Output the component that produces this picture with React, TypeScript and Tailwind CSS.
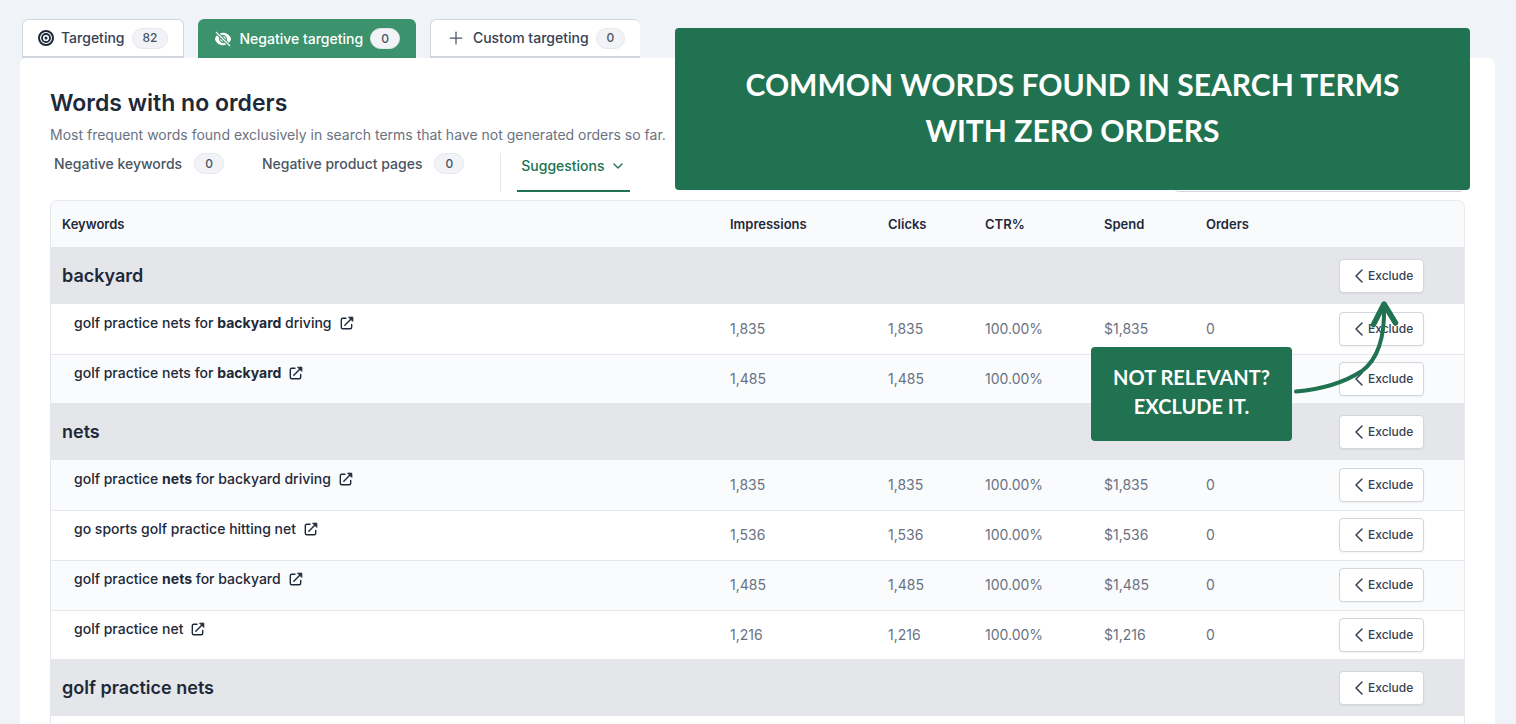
import React from 'react';
import { ChevronDown, Plus } from 'lucide-react';
import { HiEyeSlash } from 'react-icons/hi2';

interface GroupRow {
  kind: 'group';
  word: string;
}

interface TermRow {
  kind: 'term';
  before: string;
  bold?: string;
  after?: string;
  volume: string;
  spend?: string;
  orders?: string;
}

const ROWS: (GroupRow | TermRow)[] = [
  { kind: 'group', word: 'backyard' },
  { kind: 'term', before: 'golf practice nets for ', bold: 'backyard', after: ' driving', volume: '1,835', spend: '$1,835', orders: '0' },
  { kind: 'term', before: 'golf practice nets for ', bold: 'backyard', volume: '1,485' },
  { kind: 'group', word: 'nets' },
  { kind: 'term', before: 'golf practice ', bold: 'nets', after: ' for backyard driving', volume: '1,835', spend: '$1,835', orders: '0' },
  { kind: 'term', before: 'go sports golf practice hitting net', volume: '1,536', spend: '$1,536', orders: '0' },
  { kind: 'term', before: 'golf practice ', bold: 'nets', after: ' for backyard', volume: '1,485', spend: '$1,485', orders: '0' },
  { kind: 'term', before: 'golf practice net', volume: '1,216', spend: '$1,216', orders: '0' },
  { kind: 'group', word: 'golf practice nets' },
];

const Badge = ({ children }: { children: React.ReactNode }) => (
  <span className="inline-flex h-[21px] items-center rounded-full border border-gray-200 bg-[#f1f3f6] px-[10px] text-xs font-medium text-gray-600">
    {children}
  </span>
);

const TargetIcon = () => (
  <svg viewBox="0 0 16 16" className="size-4" fill="none" stroke="currentColor" aria-hidden="true">
    <circle cx="8" cy="8" r="7" strokeWidth="2" />
    <circle cx="8" cy="8" r="4" strokeWidth="1.8" />
    <circle cx="8" cy="8" r="1.5" fill="currentColor" stroke="none" />
  </svg>
);

const OpenIcon = () => (
  <svg viewBox="0 0 14 14" className="size-[14px]" fill="none" stroke="currentColor" strokeWidth="1.4" strokeLinecap="round" strokeLinejoin="round" aria-hidden="true">
    <path d="M6 2.300H2.800Q1.300 2.300 1.300 3.800V11.200Q1.300 12.700 2.800 12.700H10.200Q11.700 12.700 11.700 11.200V8.500" />
    <path d="M4.800 9.200L11.500 2.500" />
    <path d="M9 1.200H12.800V5Z" fill="currentColor" strokeWidth="1" />
  </svg>
);

const ExcludeButton = () => (
  <button
    type="button"
    className="flex h-[34px] w-[85px] items-center gap-[5px] rounded border border-gray-300 bg-white pl-[15px] text-xs font-medium text-gray-700 shadow-xs"
  >
    <svg viewBox="0 0 8 14" className="h-[14px] w-2" fill="none" stroke="currentColor" strokeWidth="1.500" strokeLinecap="round" strokeLinejoin="round" aria-hidden="true">
      <path d="M7 1L1 7L7 13" />
    </svg>
    Exclude
  </button>
);

const TargetingTabs = () => (
  <nav className="flex gap-[14px] pl-[22px] pt-[19px] text-sm font-medium text-gray-700">
    <button type="button" className="flex h-[39px] items-center gap-[7px] rounded-t-md border border-b-2 border-gray-300 bg-white px-[15px]">
      <span className="text-gray-800"><TargetIcon /></span>
      Targeting
      <Badge>82</Badge>
    </button>
    <button type="button" className="flex h-[39px] items-center gap-[7px] rounded-t-md bg-[#3b926d] px-4 text-white">
      <HiEyeSlash className="size-[18px]" />
      Negative targeting
      <Badge>0</Badge>
    </button>
    <button type="button" className="flex h-[39px] items-center gap-[7px] rounded-t-md border border-b-2 border-r-0 border-gray-300 bg-white px-[15px]">
      <Plus className="size-5 text-gray-600" strokeWidth={1.5} />
      Custom targeting
      <Badge>0</Badge>
    </button>
  </nav>
);

const SubTabs = () => (
  <div className="flex h-[39px] items-start text-sm font-medium text-gray-600">
    <button type="button" className="flex items-center gap-3 pl-1">
      Negative keywords
      <Badge>0</Badge>
    </button>
    <button type="button" className="ml-[38px] flex items-center gap-3">
      Negative product pages
      <Badge>0</Badge>
    </button>
    <div className="ml-9 h-full border-l border-gray-200" />
    <button type="button" className="ml-4 flex h-full items-center gap-[5px] border-b-2 border-[#207250] px-1 pb-3 text-[#207250]">
      Suggestions
      <ChevronDown className="size-4" />
    </button>
    <input
      type="search"
      aria-label="Search keywords"
      className="ml-auto h-[39px] w-[292px] rounded-md border border-gray-300 bg-white px-3"
    />
  </div>
);

const KeywordTable = () => (
  <table className="w-full table-fixed text-left text-sm text-gray-500">
    <colgroup>
      <col />
      <col className="w-[158px]" />
      <col className="w-[97px]" />
      <col className="w-[119px]" />
      <col className="w-[102px]" />
      <col className="w-[133px]" />
      <col className="w-[137px]" />
    </colgroup>
    <thead className="bg-[#f9fafb] text-[13px] text-gray-800">
      <tr className="h-[46px]">
        <th className="pl-[11px] font-semibold">Keywords</th>
        <th className="pl-3 font-semibold">Impressions</th>
        <th className="pl-3 font-semibold">Clicks</th>
        <th className="pl-3 font-semibold">CTR%</th>
        <th className="pl-3 font-semibold">Spend</th>
        <th className="pl-3 font-semibold">Orders</th>
        <th aria-label="Actions" />
      </tr>
    </thead>
    <tbody>
      {ROWS.map((row, i) => {
        if (row.kind === 'group') {
          return (
            <tr key={i} className="h-[57px] bg-[#e5e6ea]">
              <th colSpan={6} scope="colgroup" className="pl-[11px] text-lg font-semibold text-gray-800">
                {row.word}
              </th>
              <td className="pl-3"><ExcludeButton /></td>
            </tr>
          );
        }
        const divided = ROWS[i + 1]?.kind === 'term';
        return (
          <tr key={i} className={`${divided ? 'h-[50px] border-b border-gray-200' : 'h-[49px]'} ${i % 2 === 0 ? 'bg-[#f9fbfc]' : 'bg-white'}`}>
            <td className="pb-3 pl-[23px] font-medium text-gray-800">
              <a href="#" className="inline-flex items-center gap-2">
                <span>
                  {row.before}
                  {row.bold && <b className="font-bold">{row.bold}</b>}
                  {row.after}
                </span>
                <OpenIcon />
              </a>
            </td>
            <td className="pl-3">{row.volume}</td>
            <td className="pl-3">{row.volume}</td>
            <td className="pl-3">100.00%</td>
            <td className="pl-3">{row.spend}</td>
            <td className="pl-3">{row.orders}</td>
            <td className="pl-3"><ExcludeButton /></td>
          </tr>
        );
      })}
    </tbody>
  </table>
);

// Notes pinned over the page
const Annotations = () => (
  <>
    <div className="absolute right-[46px] top-7 flex h-[162px] w-[795px] items-center justify-center rounded bg-[#207250] pb-1 text-center font-['Lato','Liberation_Sans',sans-serif] text-[30px] font-bold leading-[46px] text-white">
      <p>COMMON WORDS FOUND IN SEARCH TERMS<br />WITH ZERO ORDERS</p>
    </div>
    <div className="absolute right-56 top-[347px] h-[94px] w-[201px] rounded bg-[#207250] pt-4 text-center font-['Lato','Liberation_Sans',sans-serif] text-xl font-bold leading-[29px] text-white">
      <p>NOT RELEVANT?<br />EXCLUDE IT.</p>
    </div>
    <svg
      viewBox="0 0 110 100"
      className="pointer-events-none absolute right-[116px] top-[298px] h-[100px] w-[110px]"
      fill="none"
      stroke="#207250"
      strokeLinecap="round"
      strokeLinejoin="round"
      aria-hidden="true"
    >
      <path d="M6 93.500C36 91 58 82 72 73C88 61 95 40 94 8" strokeWidth="4" />
      <path d="M83.500 26.500L94 6L105.500 25" strokeWidth="5.500" />
    </svg>
  </>
);

const App: React.FC = () => (
  <div className="relative flex h-screen flex-col overflow-hidden bg-[#f0f3f8] font-['Inter','Liberation_Sans',sans-serif]">
    <TargetingTabs />
    <main className="ml-5 mr-[21px] flex flex-1 flex-col rounded-t-md bg-white pl-[30px] pr-[30px] pt-[29px]">
      <h1 className="text-[23px] font-semibold leading-8 text-gray-800">Words with no orders</h1>
      <p className="mb-2 mt-[6px] text-sm text-gray-500">Most frequent words found exclusively in search terms that have not generated orders so far.</p>
      <SubTabs />
      <section className="mt-2 flex-1 overflow-hidden rounded-t-lg border border-b-0 border-gray-200">
        <KeywordTable />
      </section>
    </main>
    <Annotations />
  </div>
);

export default App;
